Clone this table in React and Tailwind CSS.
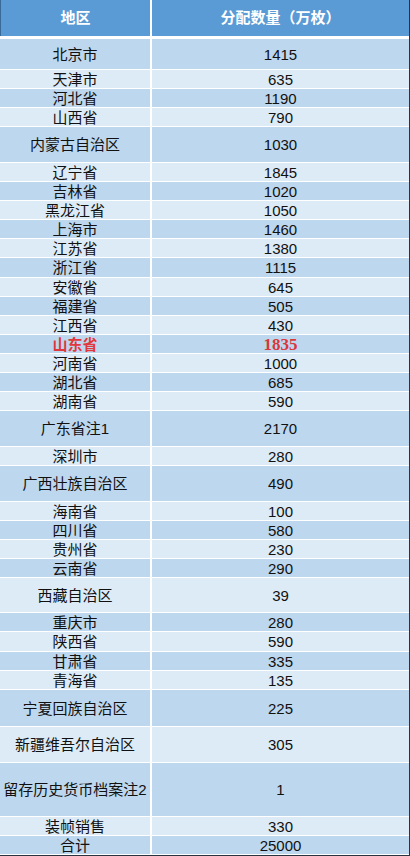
const rows = [
  ["北京市", "1415", 31],
  ["天津市", "635", 19],
  ["河北省", "1190", 19],
  ["山西省", "790", 19],
  ["内蒙古自治区", "1030", 36],
  ["辽宁省", "1845", 19],
  ["吉林省", "1020", 19],
  ["黑龙江省", "1050", 19],
  ["上海市", "1460", 19],
  ["江苏省", "1380", 19],
  ["浙江省", "1115", 20],
  ["安徽省", "645", 19],
  ["福建省", "505", 19],
  ["江西省", "430", 19],
  ["山东省", "1835", 19, true],
  ["河南省", "1000", 19],
  ["湖北省", "685", 19],
  ["湖南省", "590", 19],
  ["广东省注1", "2170", 36],
  ["深圳市", "280", 19],
  ["广西壮族自治区", "490", 36],
  ["海南省", "100", 19],
  ["四川省", "580", 19],
  ["贵州省", "230", 19],
  ["云南省", "290", 19],
  ["西藏自治区", "39", 35],
  ["重庆市", "280", 19],
  ["陕西省", "590", 20],
  ["甘肃省", "335", 19],
  ["青海省", "135", 19],
  ["宁夏回族自治区", "225", 37],
  ["新疆维吾尔自治区", "305", 36],
  ["留存历史货币档案注2", "1", 54],
  ["装帧销售", "330", 19],
  ["合计", "25000", 19],
]

export default function App() {
  return (
    <div className="w-[410px] h-[856px] bg-white border-r border-b border-[#2a3440] font-['Liberation_Sans','Noto_Sans_CJK_SC',sans-serif] text-[15px] text-[#111]">
      <div className="h-[39px] border-b-[3px] border-white grid grid-cols-[152px_1fr]">
        <div className="bg-[#5b9bd5] border-r-2 border-white border-l border-l-[#3a6a9a] flex items-center justify-center font-bold text-white">地区</div>
        <div className="bg-[#5b9bd5] flex items-center justify-center font-bold text-white">分配数量（万枚）</div>
      </div>
      {rows.map(([name, num, h, hot], i) => {
        const bg = i % 2 === 0 ? "bg-[#bdd7ee]" : "bg-[#ddebf7]"
        return (
          <div key={name} className="grid grid-cols-[152px_1fr] border-b border-white" style={{ height: h }}>
            <div className={`${bg} border-r-2 border-white flex items-center justify-center leading-none whitespace-nowrap ${hot ? "text-[#e0383c] font-bold" : ""}`}>
              {name}
            </div>
            <div className={`${bg} flex items-center justify-center leading-none ${hot ? "text-[#d8383c] font-bold font-['Liberation_Serif',serif] text-[17px]" : "text-[15px]"}`}>
              {num}
            </div>
          </div>
        )
      })}
    </div>
  )
}
